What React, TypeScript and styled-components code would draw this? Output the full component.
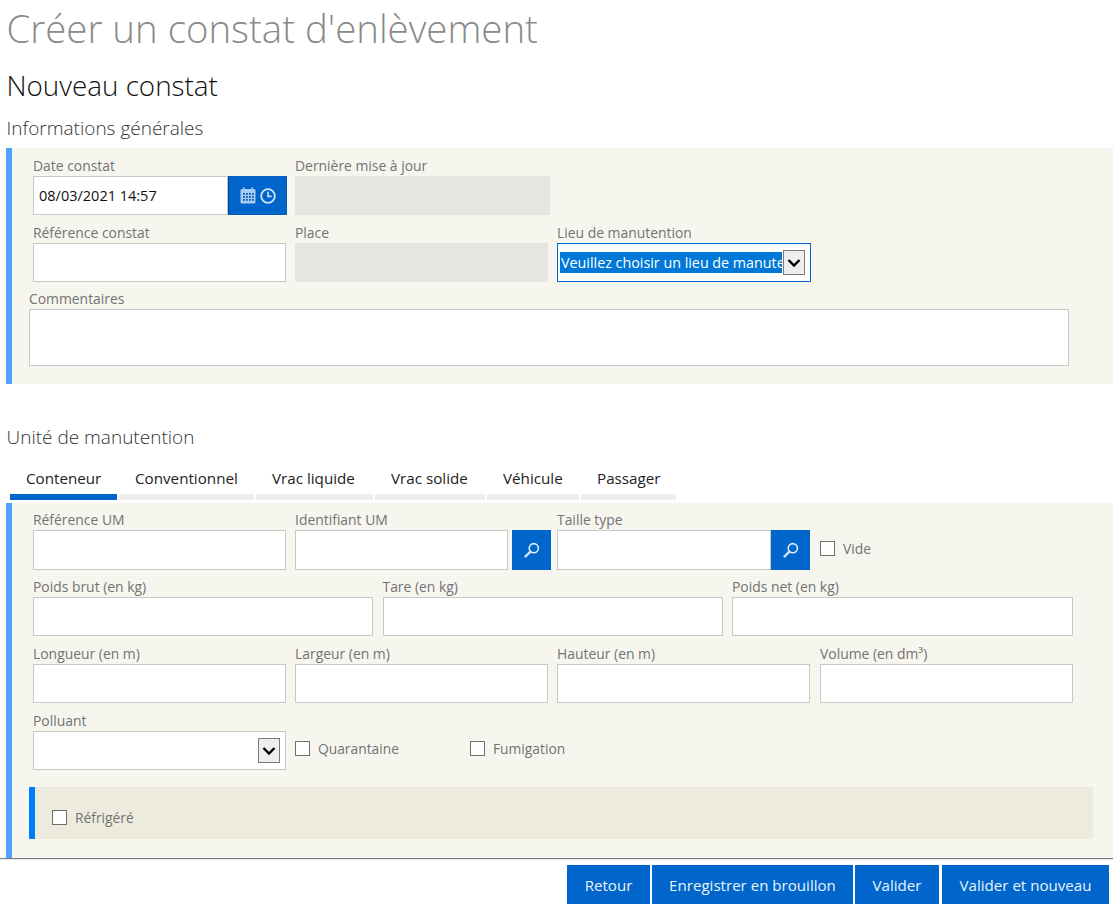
import React from "react";
import styled, { createGlobalStyle } from "styled-components";

const Global = createGlobalStyle`
  html, body { margin: 0; padding: 0; background: #fff; overflow: hidden; }
  * { box-sizing: border-box; }
  body { font-family: "Open Sans", "Noto Sans", "Liberation Sans", sans-serif; }
`;

const Page = styled.div`
  height: 907px;
  display: flex;
  flex-direction: column;
  overflow: hidden;
`;
const Main = styled.main`
  height: 858px;
  flex: none;
  overflow: hidden;
  padding-left: 6px;
`;
const Title = styled.h1`
  margin: 0 0 0 0.5px;
  height: 60px;
  line-height: 57px;
  font-size: 38.4px;
  font-weight: 300;
  color: #8a8a8a;
  white-space: nowrap;
`;
const Subtitle = styled.h2`
  margin: 0 0 0 0.5px;
  height: 52px;
  line-height: 51px;
  font-size: 27.8px;
  font-weight: 300;
  color: #111;
`;
const SectionHeading = styled.h3`
  margin: 0 0 0 0.5px;
  height: 36px;
  line-height: 32px;
  font-size: 19px;
  font-weight: 300;
  color: #333;
`;
const Panel = styled.section<{ $height: number; $top: number }>`
  height: ${(p) => p.$height}px;
  padding: ${(p) => p.$top}px 0 0 21px;
  border-left: 6px solid #4da3ff;
  background: #f6f6ef;
`;
const Spacer = styled.div`
  height: 37px;
`;
const Row = styled.div<{ $cols: string; $gap?: number; $after?: number }>`
  display: grid;
  grid-template-columns: ${(p) => p.$cols};
  column-gap: ${(p) => p.$gap ?? 9}px;
  margin-bottom: ${(p) => p.$after ?? 9}px;
`;
const Field = styled.div<{ $ml?: number }>`
  display: flex;
  flex-direction: column;
  min-width: 0;
  margin-left: ${(p) => p.$ml ?? 0}px;
`;
const Label = styled.label`
  height: 19px;
  line-height: 18.5px;
  font-size: 13.9px;
  color: #737373;
  white-space: nowrap;
`;
const Input = styled.div<{ $h?: number; $disabled?: boolean }>`
  height: ${(p) => p.$h ?? 39}px;
  flex: 1 1 auto;
  min-width: 0;
  border: 1px solid ${(p) => (p.$disabled ? "#e6e5e1" : "#c8c8c8")};
  background: ${(p) => (p.$disabled ? "#e6e5e1" : "#fff")};
  padding-left: 5px;
  font-size: 14.5px;
  line-height: 38px;
  color: #111;
`;
const InputGroup = styled.div<{ $over?: number }>`
  display: flex;
  margin-right: ${(p) => -(p.$over ?? 0)}px;
`;
const DateButton = styled.button`
  flex: none;
  width: 59px;
  height: 39px;
  border: 1px solid #0a5cb8;
  border-left: 1px solid #003f8f;
  background: #0066cc;
  padding: 0;
  display: flex;
  align-items: center;
  justify-content: center;
  gap: 4px;
`;
const SearchButton = styled.button<{ $gap?: number }>`
  flex: none;
  width: 39px;
  height: 40px;
  margin-left: ${(p) => p.$gap ?? 0}px;
  border: 0;
  padding: 0;
  background: #0066cc;
  display: flex;
  align-items: center;
  justify-content: center;
`;
const CommentWrap = styled.div`
  margin: -1px 0 0 -4px;
  width: 1040px;
`;
const Select = styled.div<{ $focus?: boolean }>`
  height: 39px;
  display: flex;
  align-items: center;
  padding: 0 5px 0 2px;
  border: 1px solid ${(p) => (p.$focus ? "#0066cc" : "#c8c8c8")};
  background: #fff;
  overflow: hidden;
`;
const SelectValue = styled.div`
  flex: 1 1 auto;
  min-width: 0;
  height: 21px;
  line-height: 21px;
  padding-left: 1px;
  font-size: 14.3px;
  background: #0078d7;
  color: #fff;
  white-space: nowrap;
  overflow: hidden;
`;
const SelectEmpty = styled.div`
  flex: 1 1 auto;
`;
const Arrow = styled.span`
  flex: none;
  width: 22px;
  height: 25px;
  margin-left: 1px;
  border: 1px solid #7a7a7a;
  background: #eeeeee;
  display: flex;
  align-items: center;
  justify-content: center;
`;
const Tabs = styled.div`
  height: 43px;
  margin: 0 0 3px 4px;
  display: flex;
  gap: 2px;
`;
const Tab = styled.div<{ $w: number; $active?: boolean }>`
  width: ${(p) => p.$w}px;
  padding: 12px 0 0 16px;
  border-bottom: 6px solid ${(p) => (p.$active ? "#0066cc" : "#eeeeee")};
  font-size: 15.2px;
  line-height: 18px;
  color: #222;
  white-space: nowrap;
`;
const CheckLine = styled.label<{ $w?: number }>`
  display: flex;
  align-items: center;
  gap: 8px;
  ${(p) => (p.$w ? `width: ${p.$w}px;` : "")}
  font-size: 13.8px;
  color: #737373;
  white-space: nowrap;
`;
const Box = styled.span`
  flex: none;
  width: 15px;
  height: 15px;
  border: 1px solid #6f6f6f;
  background: #fff;
`;
const CheckCell = styled.div<{ $top: number; $ml?: number }>`
  display: flex;
  align-items: center;
  padding-top: ${(p) => p.$top}px;
  margin-left: ${(p) => p.$ml ?? 0}px;
`;
const SubPanel = styled.div`
  margin: 17px 0 0 -4px;
  width: 1064px;
  height: 52px;
  border-left: 6px solid #007bff;
  background: #ecebdd;
  padding: 21px 0 0 17px;
`;
const Footer = styled.footer`
  flex: 1;
  border-top: 1px solid #777;
  box-shadow: inset 0 1px 0 #eee;
  padding: 6px 4px 0 0;
  display: flex;
  justify-content: flex-end;
  align-items: flex-start;
  gap: 2px;
`;
const Action = styled.button<{ $w: number; $ml?: number }>`
  width: ${(p) => p.$w}px;
  margin-left: ${(p) => p.$ml ?? 0}px;
  height: 39px;
  border: 0;
  padding: 0;
  background: #0066cc;
  color: #eaf3fc;
  font-family: inherit;
  font-size: 15.1px;
`;

const Chevron = () => (
  <svg width="14" height="10" viewBox="0 0 14 10">
    <path d="M1.5 2 L7 7.5 L12.5 2" fill="none" stroke="#000" strokeWidth="2.4" />
  </svg>
);

const Calendar = () => (
  <svg width="16" height="17" viewBox="0 0 16 17">
    <rect x="0.5" y="2" width="15" height="14.5" rx="1.5" fill="#a9cdf0" />
    <rect x="3" y="0.5" width="1.6" height="3" fill="#a9cdf0" />
    <rect x="11.4" y="0.5" width="1.6" height="3" fill="#a9cdf0" />
    <g fill="#0a5cb8">
      {[3, 6, 9, 12].flatMap((x) =>
        [6, 9, 12].map((y) => <rect key={`${x}-${y}`} x={x} y={y} width="1.8" height="1.8" />)
      )}
    </g>
  </svg>
);

const Clock = () => (
  <svg width="16" height="16" viewBox="0 0 16 16">
    <circle cx="8" cy="8" r="6.8" fill="none" stroke="#cfe3f7" strokeWidth="1.8" />
    <path d="M8 3.8 V8.4 H11.6" fill="none" stroke="#cfe3f7" strokeWidth="1.6" />
  </svg>
);

const Lens = () => (
  <svg width="16" height="16" viewBox="0 0 16 16">
    <circle cx="9.8" cy="6.2" r="4.6" fill="none" stroke="#e4effa" strokeWidth="1.6" />
    <path d="M6.4 9.6 L1.6 14.4" stroke="#cfe3f7" strokeWidth="2.4" strokeLinecap="round" />
  </svg>
);

const tabs = [
  { label: "Conteneur", w: 107, active: true },
  { label: "Conventionnel", w: 135 },
  { label: "Vrac liquide", w: 117 },
  { label: "Vrac solide", w: 110 },
  { label: "Véhicule", w: 92 },
  { label: "Passager", w: 95 },
];

const TextField = ({ label, disabled, ml }: { label: string; disabled?: boolean; ml?: number }) => (
  <Field $ml={ml}>
    <Label>{label}</Label>
    <Input $disabled={disabled} />
  </Field>
);

export default function App() {
  return (
    <Page>
      <Global />
      <Main>
        <Title>Créer un constat d'enlèvement</Title>
        <Subtitle>Nouveau constat</Subtitle>
        <SectionHeading>Informations générales</SectionHeading>
        <Panel $height={236} $top={9}>
          <Row $cols="253px 255px">
            <Field>
              <Label>Date constat</Label>
              <InputGroup $over={1}>
                <Input>08/03/2021 14:57</Input>
                <DateButton aria-label="Choisir la date">
                  <Calendar />
                  <Clock />
                </DateButton>
              </InputGroup>
            </Field>
            <TextField label="Dernière mise à jour" disabled />
          </Row>
          <Row $cols="253px 253px 254px">
            <TextField label="Référence constat" />
            <TextField label="Place" disabled />
            <Field>
              <Label>Lieu de manutention</Label>
              <Select $focus>
                <SelectValue>Veuillez choisir un lieu de manutention</SelectValue>
                <Arrow>
                  <Chevron />
                </Arrow>
              </Select>
            </Field>
          </Row>
          <CommentWrap>
            <Field>
              <Label>Commentaires</Label>
              <Input $h={57} />
            </Field>
          </CommentWrap>
        </Panel>
        <Spacer />
        <SectionHeading>Unité de manutention</SectionHeading>
        <Tabs>
          {tabs.map((t) => (
            <Tab key={t.label} $w={t.w} $active={t.active}>
              {t.label}
            </Tab>
          ))}
        </Tabs>
        <Panel $height={355} $top={8}>
          <Row $cols="253px 253px 253px auto" $after={8}>
            <Field>
              <Label>Référence UM</Label>
              <Input $h={40} />
            </Field>
            <Field>
              <Label>Identifiant UM</Label>
              <InputGroup $over={3}>
                <Input $h={40} />
                <SearchButton $gap={4} aria-label="Rechercher">
                  <Lens />
                </SearchButton>
              </InputGroup>
            </Field>
            <Field>
              <Label>Taille type</Label>
              <InputGroup>
                <Input $h={40} />
                <SearchButton aria-label="Rechercher">
                  <Lens />
                </SearchButton>
              </InputGroup>
            </Field>
            <CheckCell $top={16} $ml={1}>
              <CheckLine>
                <Box />
                Vide
              </CheckLine>
            </CheckCell>
          </Row>
          <Row $cols="340px 340px 341px" $gap={9.5}>
            <TextField label="Poids brut (en kg)" />
            <TextField label="Tare (en kg)" />
            <TextField label="Poids net (en kg)" />
          </Row>
          <Row $cols="253px 253px 253px 254px" $gap={9}>
            <TextField label="Longueur (en m)" />
            <TextField label="Largeur (en m)" />
            <TextField label="Hauteur (en m)" />
            <TextField label="Volume (en dm³)" ml={1} />
          </Row>
          <Row $cols="253px auto" $gap={9}>
            <Field>
              <Label>Polluant</Label>
              <Select>
                <SelectEmpty />
                <Arrow>
                  <Chevron />
                </Arrow>
              </Select>
            </Field>
            <CheckCell $top={14}>
              <CheckLine $w={175}>
                <Box />
                Quarantaine
              </CheckLine>
              <CheckLine>
                <Box />
                Fumigation
              </CheckLine>
            </CheckCell>
          </Row>
          <SubPanel>
            <CheckLine>
              <Box />
              Réfrigéré
            </CheckLine>
          </SubPanel>
        </Panel>
      </Main>
      <Footer>
        <Action $w={83}>Retour</Action>
        <Action $w={201}>Enregistrer en brouillon</Action>
        <Action $w={84}>Valider</Action>
        <Action $w={167} $ml={1}>
          Valider et nouveau
        </Action>
      </Footer>
    </Page>
  );
}
